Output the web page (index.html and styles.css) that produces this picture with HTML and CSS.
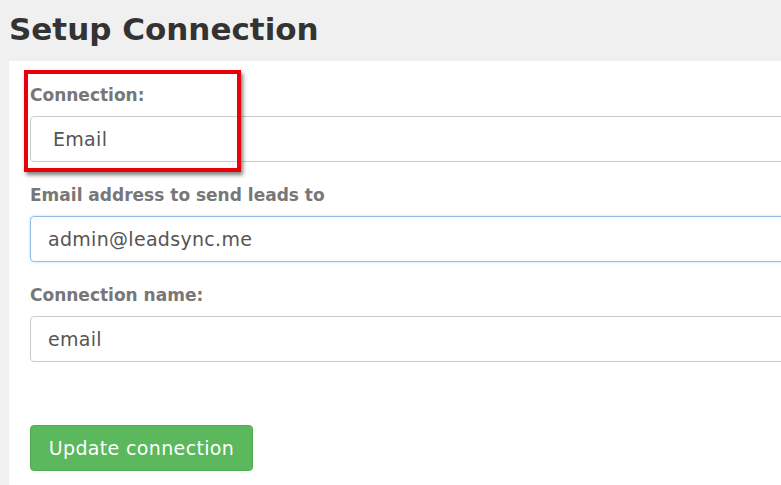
FILE: index.html
```html
<!DOCTYPE html>
<html>
<head>
<meta charset="utf-8">
<link rel="stylesheet" href="styles.css">
</head>
<body>
<h1 class="title">Setup Connection</h1>
<div class="panel">
  <div class="highlight"></div>
  <div class="group">
    <label class="label">Connection:</label>
    <div class="field select">Email</div>
  </div>
  <div class="group">
    <label class="label">Email address to send leads to</label>
    <div class="field focus">admin@leadsync.me</div>
  </div>
  <div class="group">
    <label class="label">Connection name:</label>
    <div class="field">email</div>
  </div>
  <button class="btn">Update connection</button>
</div>
</body>
</html>
```
FILE: styles.css
```css
html, body {
  margin: 0;
  padding: 0;
  background: #f0f0f0;
  overflow: hidden;
  height: 485px;
}
body {
  padding-left: 9px;
  font-family: "DejaVu Sans", sans-serif;
}
.title {
  margin: 0;
  height: 61px;
  line-height: 58px;
  font-size: 31px;
  font-weight: 700;
  color: #333;
}
.panel {
  position: relative;
  background: #fff;
  height: 424px;
  overflow: hidden;
  padding: 22px 0 0 21px;
  box-sizing: border-box;
}
.highlight {
  position: absolute;
  left: 15px;
  top: 9px;
  width: 217px;
  height: 102px;
  box-sizing: border-box;
  border: 4px solid #e8000b;
  box-shadow: 2px 3px 4px rgba(0,0,0,0.5);
  pointer-events: none;
  z-index: 1;
}
.group {
  margin-bottom: 21px;
}
.label {
  display: block;
  font-size: 17px;
  line-height: 24px;
  font-weight: 700;
  color: #777;
  margin-bottom: 9px;
}
.field {
  width: calc(100% + 20px);
  height: 46px;
  box-sizing: border-box;
  border: 1px solid #ccc;
  border-radius: 4px;
  padding: 0 17px;
  display: flex;
  align-items: center;
  font-size: 19px;
  letter-spacing: 0.3px;
  color: #555;
}
.select {
  padding-left: 22px;
}
.focus {
  border-color: #8fbde8;
  box-shadow: 0 0 3px rgba(102,175,233,0.4);
}
.btn {
  margin-top: 42px;
  width: 223px;
  height: 46px;
  background: #5cb85c;
  border: 1px solid #4cae4c;
  border-radius: 4px;
  color: #fff;
  font-family: inherit;
  font-size: 19px;
  letter-spacing: 0.35px;
  padding: 0;
}
```
